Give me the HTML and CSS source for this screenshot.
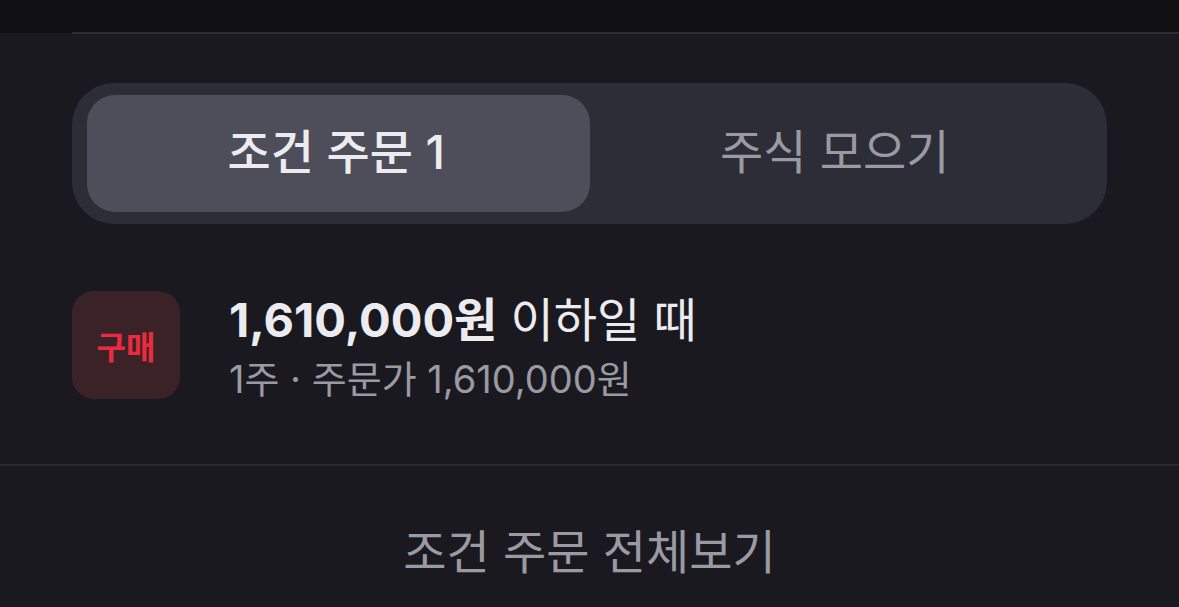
FILE: index.html
```html
<!DOCTYPE html>
<html lang="ko">
<head>
<meta charset="utf-8">
<title>조건 주문</title>
<link rel="stylesheet" href="styles.css">
</head>
<body>
	<div class="topbar">
		<div class="topline"></div>
	</div>

	<div class="content">
		<div class="segment">
			<div class="tab active">조건 주문 1</div>
			<div class="tab">주식 모으기</div>
		</div>

		<div class="order">
			<div class="badge buy">구매</div>
			<div class="info">
				<div class="title"><b>1,610,000원</b> 이하일 때</div>
				<div class="sub">1주 · 주문가 1,610,000원</div>
			</div>
		</div>
	</div>

	<div class="more">조건 주문 전체보기</div>
</body>
</html>
```

FILE: styles.css
```css
html, body {
	margin: 0;
	padding: 0;
}
body {
	background-color: #1a1920;
	color: #e6e6ea;
	font-family: "Inter", "Noto Sans CJK KR", sans-serif;
	overflow: hidden;
}
.topbar {
	height: 33px;
	background-color: #111113;
}
.topline {
	margin-left: 72px;
	height: 33px;
	border-bottom: 2px solid #2e2d36;
	box-sizing: border-box;
	position: relative;
	top: 1px;
}
.content {
	padding: 50px 72px 0;
}
.segment {
	display: grid;
	grid-template-columns: 1fr 1fr;
	height: 141px;
	padding: 12px 15px;
	box-sizing: border-box;
	background-color: #2d2d37;
	border-radius: 42px;
}
.tab {
	display: flex;
	align-items: center;
	justify-content: center;
	font-size: 47px;
	line-height: 56px;
	font-weight: 400;
	color: #9a9aa2;
	border-radius: 28px;
	padding-bottom: 4px;
	padding-right: 12px;
}
.tab.active {
	background-color: #4e4e5a;
	color: #ececf0;
	font-weight: 500;
	padding-right: 4px;
}
.order {
	display: flex;
	align-items: flex-start;
	gap: 49px;
	margin-top: 67px;
	padding-bottom: 63px;
	border-bottom: 2px solid #2a2930;
	margin-left: -72px;
	margin-right: -72px;
	padding-left: 72px;
}
.badge {
	width: 108px;
	height: 108px;
	border-radius: 22px;
	display: flex;
	align-items: center;
	justify-content: center;
	font-size: 32px;
	font-weight: 700;
}
.badge.buy {
	background-color: #3a2227;
	color: #ea2b3f;
}
.info {
	padding-top: 1px;
}
.title {
	font-size: 47px;
	line-height: 56px;
	color: #ececf0;
}
.title b {
	font-weight: 700;
}
.sub {
	margin-top: 9px;
	font-size: 38px;
	line-height: 44px;
	color: #9a9aa2;
}
.more {
	text-align: center;
	font-size: 47px;
	line-height: 56px;
	color: #9a9aa2;
	padding-top: 58px;
}
```
